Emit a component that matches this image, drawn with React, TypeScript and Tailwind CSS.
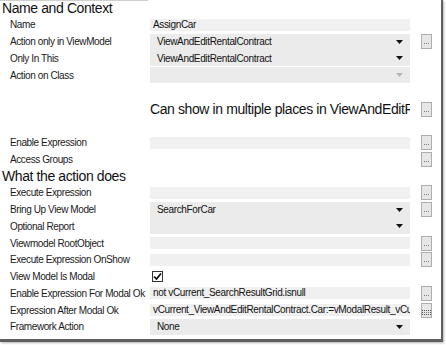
import React from "react";

const font = { fontFamily: '"Liberation Sans", Arial, sans-serif' };

const Dots = ({ focused }: { focused?: boolean }) => (
  <div className="ml-[11px] w-[11px] h-[15px] border border-[#adadad] bg-[#e6e6e6] flex items-end justify-center pb-[4px] shrink-0">
    <div
      className={`flex gap-[1px] ${focused ? "outline outline-1 outline-dotted outline-[#555] outline-offset-[1px]" : ""}`}
    >
      <span className="w-px h-px bg-[#8b6f8f]" />
      <span className="w-px h-px bg-[#6f7f9f]" />
      <span className="w-px h-px bg-[#8b6f8f]" />
    </div>
  </div>
);

const Arrow = ({ disabled }: { disabled?: boolean }) => (
  <svg width="7" height="4" viewBox="0 0 7 4" className="mr-[7px]">
    <path d="M0 0 H7 L3.5 4 Z" fill={disabled ? "#b5b5b5" : "#111"} />
  </svg>
);

type Kind = "text" | "select" | "check" | "none";

interface RowProps {
  label: string;
  kind: Kind;
  value?: string;
  button?: boolean;
  focused?: boolean;
  disabled?: boolean;
}

const Row = ({ label, kind, value, button, focused, disabled }: RowProps) => (
  <div className="flex items-center h-[16.75px]">
    <div className="w-[150px] pl-[10px] text-[10px] tracking-[-0.4px] text-[#1a1a1a] whitespace-nowrap">
      {label}
    </div>
    <div className="w-[260px] flex items-center">
      {kind === "text" && (
        <div className="w-full h-[12px] bg-[#f0f0f0] pl-[3px] text-[10px] tracking-[-0.35px] leading-[12px] text-[#111] whitespace-nowrap overflow-hidden">
          {value}
        </div>
      )}
      {kind === "select" && (
        <div className="w-full h-[16px] bg-[#ebebeb] flex items-center justify-between pl-[7px] text-[10px] tracking-[-0.35px] text-[#111]">
          <span className="whitespace-nowrap">{value}</span>
          <Arrow disabled={disabled} />
        </div>
      )}
      {kind === "check" && (
        <div className="ml-[2px] w-[11px] h-[11px] border border-[#333] bg-white flex items-center justify-center">
          <svg width="9" height="9" viewBox="0 0 9 9">
            <path d="M1 4.5 L3.5 7 L8 1.5" stroke="#000" strokeWidth="1.6" fill="none" />
          </svg>
        </div>
      )}
    </div>
    {button && <Dots focused={focused} />}
  </div>
);

const Header = ({ text, h }: { text: string; h: string }) => (
  <div className={`${h} flex items-center pl-[2px] text-[14px] tracking-[-0.4px] text-[#111] whitespace-nowrap`}>
    {text}
  </div>
);

export default function App() {
  return (
    <div className="w-[446px] h-[345px] bg-white overflow-hidden" style={font}>
      <div className="w-[443px] h-[342px] bg-white border-r-2 border-b-[3px] border-[#5f5f5f] shadow-[1px_1px_2px_rgba(0,0,0,0.3)] overflow-hidden">
        <div className="w-[148px] h-px bg-[#cfcfcf]" />
        <Header text="Name and Context" h="h-[15.6px]" />
        <Row label="Name" kind="text" value="AssignCar" />
        <Row label="Action only in ViewModel" kind="select" value="ViewAndEditRentalContract" button />
        <Row label="Only In This" kind="select" value="ViewAndEditRentalContract" />
        <Row label="Action on Class" kind="select" disabled />
        <div className="h-[18px]" />
        <div className="flex items-center h-[16.75px]">
          <div className="w-[410px] pl-[150px] text-[14px] tracking-[-0.4px] text-[#111] whitespace-nowrap overflow-hidden">
            Can show in multiple places in ViewAndEditRentalContract
          </div>
          <Dots />
        </div>
        <div className="h-[16.25px]" />
        <Row label="Enable Expression" kind="text" button />
        <Row label="Access Groups" kind="none" button />
        <Header text="What the action does" h="h-[16.5px]" />
        <Row label="Execute Expression" kind="text" button />
        <Row label="Bring Up View Model" kind="select" value="SearchForCar" button />
        <Row label="Optional Report" kind="select" />
        <Row label="Viewmodel RootObject" kind="text" button />
        <Row label="Execute Expression OnShow" kind="text" button />
        <Row label="View Model Is Modal" kind="check" />
        <Row label="Enable Expression For Modal Ok" kind="text" value="not vCurrent_SearchResultGrid.isnull" button />
        <Row
          label="Expression After Modal Ok"
          kind="text"
          value="vCurrent_ViewAndEditRentalContract.Car:=vModalResult_vCurrent_SearchResultGrid"
          button
          focused
        />
        <Row label="Framework Action" kind="select" value="None" />
      </div>
    </div>
  );
}
